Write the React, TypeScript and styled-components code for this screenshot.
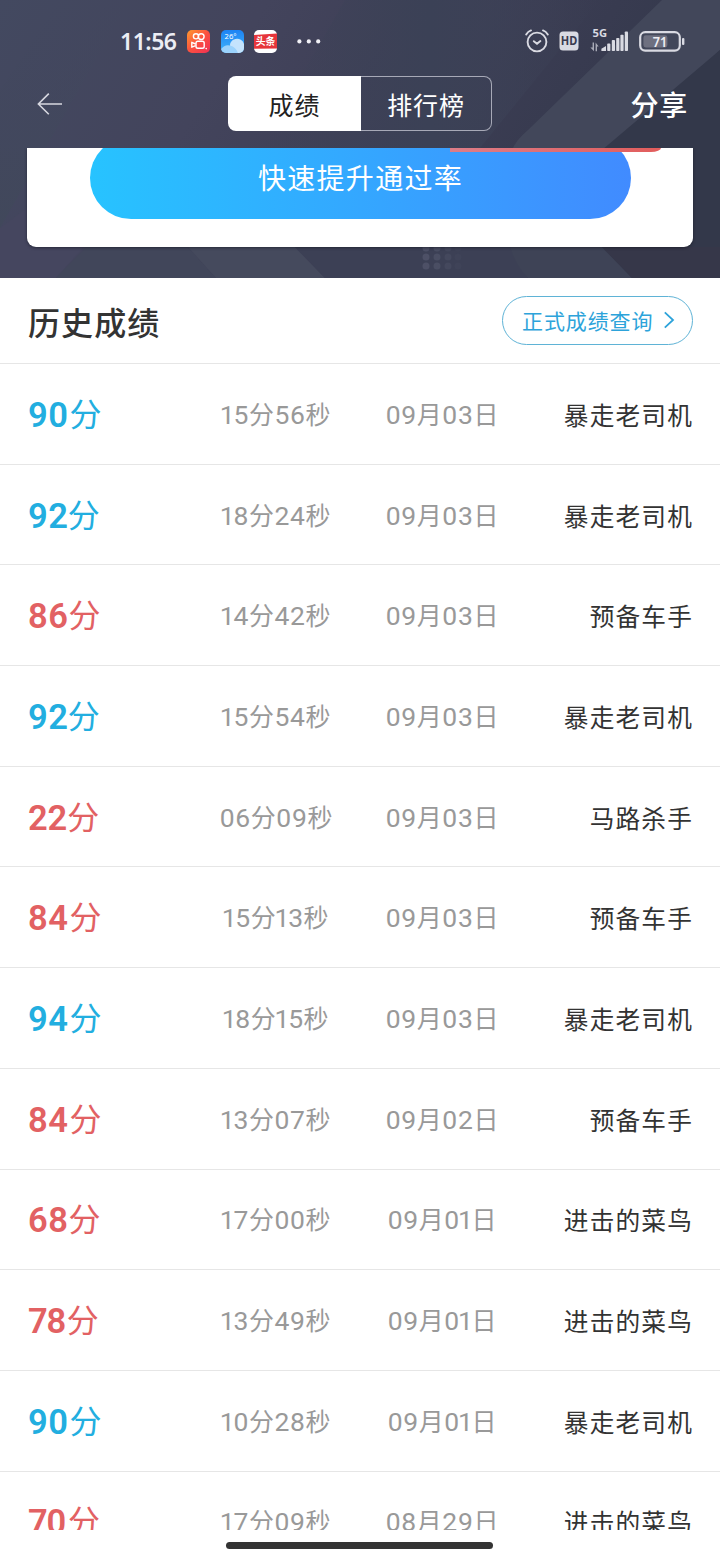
import React from "react";
import styled, { createGlobalStyle } from "styled-components";

const GlobalStyle = createGlobalStyle`
  * { box-sizing: border-box; }
  body {
    margin: 0;
    background: #fff;
    font-family: "Noto Sans", "Noto Sans CJK SC", sans-serif;
  }
`;

const Screen = styled.div`
  width: 720px;
  height: 1560px;
  display: flex;
  flex-direction: column;
  overflow: hidden;
  background: #fff;
`;

const Hero = styled.header`
  position: relative;
  flex: none;
  height: 278px;
  display: flex;
  flex-direction: column;
  background: #3e4156;
`;

const HeroArt = styled.svg`
  position: absolute;
  inset: 0;
`;

const StatusBar = styled.div`
  position: relative;
  height: 76px;
  padding: 6px 35px 0 120px;
  display: flex;
  align-items: center;
  justify-content: space-between;
`;

const StatusGroup = styled.div<{ $gap: number }>`
  display: flex;
  align-items: center;
  gap: ${(p) => p.$gap}px;
`;

const Clock = styled.span`
  width: 57px;
  font-family: "Noto Sans", sans-serif;
  font-size: 23px;
  line-height: 30px;
  font-weight: 600;
  letter-spacing: -0.5px;
  color: #ecedf4;
  white-space: nowrap;
`;

const NavBar = styled.nav`
  position: relative;
  height: 72px;
  padding: 0 32px 17px 36px;
  display: grid;
  grid-template-columns: 192px 264px 1fr;
  align-items: center;
`;

const Segments = styled.div`
  height: 55px;
  display: flex;
`;

const Segment = styled.button<{ $active?: boolean }>`
  flex: ${(p) => (p.$active ? "0 0 133px" : "1")};
  border: ${(p) => (p.$active ? "0" : "1px solid #a7a9b7")};
  border-left: 0;
  border-radius: ${(p) => (p.$active ? "8px 0 0 8px" : "0 8px 8px 0")};
  padding: 0;
  font-family: "Noto Sans CJK SC", sans-serif;
  font-size: 25px;
  letter-spacing: 0.9px;
  color: ${(p) => (p.$active ? "#222" : "#fff")};
  background: ${(p) => (p.$active ? "#fff" : "transparent")};
`;

const Share = styled.span`
  justify-self: end;
  font-family: "Noto Sans CJK SC", sans-serif;
  font-size: 28px;
  line-height: 40px;
  font-weight: 500;
  letter-spacing: 0.8px;
  color: #fff;
`;

const CardClip = styled.div`
  position: relative;
  height: 130px;
  padding: 0 27px;
  overflow: hidden;
`;

const Card = styled.section`
  display: flow-root;
  height: 99px;
  padding: 0 62px 0 63px;
  background: #fff;
  border-radius: 0 0 9px 9px;
  box-shadow: 0 1px 3px rgba(20, 22, 34, 0.6);
`;

const BoostButton = styled.button`
  display: block;
  width: 541px;
  height: 82px;
  margin-top: -11px;
  padding: 0 0 3px;
  border: 0;
  border-radius: 41px;
  font-family: "Noto Sans CJK SC", sans-serif;
  font-size: 28px;
  letter-spacing: 1.3px;
  color: #fff;
  background: linear-gradient(90deg, #27c3ff, #418bff);
`;

const BadgeEdge = styled.div`
  position: absolute;
  left: 450px;
  top: 0;
  width: 211px;
  height: 4px;
  border-radius: 0 0 10px 0 / 0 0 4px 0;
  background: linear-gradient(90deg, #dd7d88, #e25d5c);
`;

const SectionHead = styled.div`
  flex: none;
  height: 86px;
  padding: 0 27px 0 28px;
  display: flex;
  align-items: center;
  justify-content: space-between;
  border-bottom: 1px solid #e6e6e6;
`;

const Title = styled.h2`
  margin: 0;
  font-family: "Noto Sans CJK SC", sans-serif;
  font-size: 32px;
  line-height: 48px;
  font-weight: 500;
  letter-spacing: 1.1px;
  color: #333;
`;

const QueryButton = styled.button`
  width: 191px;
  height: 49px;
  padding: 0 16px 2px 19px;
  display: flex;
  align-items: center;
  justify-content: space-between;
  border: 1px solid #5fb3d6;
  border-radius: 25px;
  background: #fff;
  font-family: "Noto Sans CJK SC", sans-serif;
  font-size: 21px;
  letter-spacing: 0.9px;
  white-space: nowrap;
  color: #2da3da;
`;

const List = styled.main`
  flex: none;
  height: 1166px;
  overflow: hidden;
`;

const Row = styled.div`
  height: 100.7px;
  padding: 0 27px 0 28px;
  display: grid;
  grid-template-columns: 165px 166px 166px 1fr;
  align-items: center;
  border-bottom: 1px solid #e6e6e6;
`;

const Score = styled.div<{ $pass: boolean }>`
  display: flex;
  align-items: baseline;
  line-height: 48px;
  white-space: nowrap;
  color: ${(p) => (p.$pass ? "#22aee0" : "#e26163")};
`;

const ScoreDigit = styled.span<{ $width: number }>`
  width: ${(p) => p.$width}px;
  font-family: Roboto, sans-serif;
  font-size: 34.5px;
  font-weight: 600;
`;

const ScoreUnit = styled.span`
  position: relative;
  top: -1px;
  font-family: "Noto Sans CJK SC", sans-serif;
  font-size: 32px;
  font-weight: 400;
`;

const Stamp = styled.div`
  display: flex;
  align-items: baseline;
  justify-content: center;
  line-height: 40px;
  white-space: nowrap;
  color: #999;
`;

const Digit = styled.span<{ $narrow: boolean }>`
  width: ${(p) => (p.$narrow ? 11.8 : 15.6)}px;
  display: flex;
  justify-content: center;
  font-family: Roboto, sans-serif;
  font-size: 26.5px;
`;

const Unit = styled.span`
  width: 25.4px;
  text-align: center;
  font-family: "Noto Sans CJK SC", sans-serif;
  font-size: 25px;
`;

const Rank = styled.div`
  justify-self: end;
  font-family: "Noto Sans CJK SC", sans-serif;
  font-size: 24.7px;
  line-height: 40px;
  letter-spacing: 1.15px;
  white-space: nowrap;
  color: #333;
`;

const Footer = styled.footer`
  height: 30px;
  padding-top: 12px;
  display: flex;
  justify-content: center;
`;

const HomeBar = styled.div`
  width: 267px;
  height: 7px;
  margin-right: 1px;
  border-radius: 4px;
  background: #333;
`;

type Result = { score: number; time: string; date: string; rank: string };

const results: Result[] = [
  { score: 90, time: "15分56秒", date: "09月03日", rank: "暴走老司机" },
  { score: 92, time: "18分24秒", date: "09月03日", rank: "暴走老司机" },
  { score: 86, time: "14分42秒", date: "09月03日", rank: "预备车手" },
  { score: 92, time: "15分54秒", date: "09月03日", rank: "暴走老司机" },
  { score: 22, time: "06分09秒", date: "09月03日", rank: "马路杀手" },
  { score: 84, time: "15分13秒", date: "09月03日", rank: "预备车手" },
  { score: 94, time: "18分15秒", date: "09月03日", rank: "暴走老司机" },
  { score: 84, time: "13分07秒", date: "09月02日", rank: "预备车手" },
  { score: 68, time: "17分00秒", date: "09月01日", rank: "进击的菜鸟" },
  { score: 78, time: "13分49秒", date: "09月01日", rank: "进击的菜鸟" },
  { score: 90, time: "10分28秒", date: "09月01日", rank: "暴走老司机" },
  { score: 70, time: "17分09秒", date: "08月29日", rank: "进击的菜鸟" },
];

/* Proportional advances of the score numerals. */
const scoreAdvance: Record<string, number> = {
  "0": 21.4, "2": 19.6, "4": 21.2, "6": 20.2, "7": 18.6, "8": 20.2, "9": 20.2,
};

const StampText = ({ text }: { text: string }) => (
  <Stamp>
    {[...text].map((ch, i) =>
      /\d/.test(ch) ? (
        <Digit key={i} $narrow={ch === "1"}>{ch}</Digit>
      ) : (
        <Unit key={i}>{ch}</Unit>
      )
    )}
  </Stamp>
);

const HeroBackground = () => (
  <HeroArt width="720" height="278" viewBox="0 0 720 278">
    <defs>
      <linearGradient id="base" x1="0" y1="0" x2="1" y2="0.25">
        <stop offset="0" stopColor="#434960" />
        <stop offset="0.35" stopColor="#43445c" />
        <stop offset="0.62" stopColor="#3d3e55" />
        <stop offset="1" stopColor="#33384b" />
      </linearGradient>
      <linearGradient id="leftBand" x1="0" y1="0" x2="0" y2="1">
        <stop offset="0" stopColor="#42485f" stopOpacity="0" />
        <stop offset="1" stopColor="#41485b" />
      </linearGradient>
      <linearGradient id="midBand" x1="0" y1="0" x2="1" y2="0">
        <stop offset="0" stopColor="#3e4358" stopOpacity="0" />
        <stop offset="0.5" stopColor="#3b4156" />
        <stop offset="1" stopColor="#3e4358" stopOpacity="0" />
      </linearGradient>
    </defs>
    <rect width="720" height="278" fill="url(#base)" />
    <path d="M345 0H600L480 148H260Z" fill="url(#midBand)" />
    <path d="M0 90L60 0H130L0 228Z" fill="url(#leftBand)" />
    <path d="M0 228L27 208V278H0Z" fill="#45465f" />
    <path d="M27 240H90L56 278H27Z" fill="#45465f" />
    <path d="M86 247H188L216 278H56Z" fill="#41465a" />
    <path d="M188 247H295L325 278H216Z" fill="#454a5d" />
    <path d="M295 247H510L528 278H325Z" fill="#3c4055" />
    <path d="M662 0H720V50L612 150H512Q516 140 528 130Z" fill="#42475a" />
    <path d="M720 50V278H632L602 247V150Z" fill="#33384a" />
    <path d="M510 247H602L632 278H528Q516 266 510 247Z" fill="#3e4356" />
    <path d="M602 247H720V278H632Z" fill="#363749" />
    {[248, 257, 266].map((y) =>
      [426, 437, 448, 458].map((x, i) => (
        <circle key={`${x}-${y}`} cx={x} cy={y} r="3.5" fill="#50546a" opacity={[0.85, 0.7, 0.4, 0.15][i]} />
      ))
    )}
  </HeroArt>
);

const VideoAppIcon = () => (
  <svg width="23" height="23" viewBox="0 0 23 23">
    <defs>
      <linearGradient id="video" x1="0" y1="0" x2="1" y2="1">
        <stop offset="0" stopColor="#ff9a2e" />
        <stop offset="0.5" stopColor="#fb5040" />
        <stop offset="1" stopColor="#ee3054" />
      </linearGradient>
    </defs>
    <rect width="23" height="23" rx="5" fill="url(#video)" />
    <g fill="none" stroke="#fff" strokeWidth="1.4" strokeLinejoin="round">
      <circle cx="9" cy="6.3" r="2.6" />
      <circle cx="14.2" cy="6.6" r="2.9" />
      <rect x="9" y="11.2" width="8.2" height="7" rx="1.8" />
      <path d="M8.6 14L4.8 12.3V17.2L8.6 15.6" />
    </g>
    <circle cx="19.2" cy="18.6" r="0.8" fill="#fff" />
  </svg>
);

const WeatherIcon = () => (
  <svg width="23" height="23" viewBox="0 0 23 23">
    <defs>
      <linearGradient id="sky" x1="0" y1="0" x2="0" y2="1">
        <stop offset="0" stopColor="#1d83f4" />
        <stop offset="1" stopColor="#40b4fb" />
      </linearGradient>
      <clipPath id="tile"><rect width="23" height="23" rx="5" /></clipPath>
    </defs>
    <g clipPath="url(#tile)">
      <rect width="23" height="23" fill="url(#sky)" />
      <path d="M9 17A7 6.5 0 0 1 23 14V23H8Z" fill="#c4e3fd" />
      <path d="M0 19Q4 14 9 15.5Q15 17 17 23H0Z" fill="#9bd2fc" />
      <text x="3.6" y="9.2" fontSize="7.6" fontFamily="Noto Sans" fill="#fff">26°</text>
    </g>
  </svg>
);

const NewsIcon = () => (
  <svg width="23" height="23" viewBox="0 0 23 23">
    <rect width="23" height="23" rx="5" fill="#fff" />
    <path d="M0 5L23 3.6V18.4L0 18.8Z" fill="#e6353b" />
    <text x="11.5" y="15.2" fontSize="9.8" fontWeight="700" textAnchor="middle" fontFamily="Noto Sans CJK SC" fill="#fff">头条</text>
  </svg>
);

const MoreDots = styled.svg`
  margin-left: 10px;
`;

const AlarmIcon = () => (
  <svg width="24" height="24" viewBox="0 0 24 24" fill="none" stroke="#d9dae2" strokeWidth="1.9" strokeLinecap="round">
    <circle cx="12" cy="13" r="9.4" />
    <path d="M1.2 5.4Q3 2.4 6 1.4M22.8 5.4Q21 2.4 18 1.4" />
    <path d="M8.8 12.2L12 14.8L15.4 12" />
  </svg>
);

const HdIcon = () => (
  <svg width="20" height="20" viewBox="0 0 20 20">
    <rect x="0.5" y="0.5" width="19" height="19" rx="3.5" fill="#d9dae2" />
    <text x="10" y="14.2" fontSize="11.6" fontWeight="700" textAnchor="middle" fontFamily="Noto Sans" fill="#3a3b50" textLength="16.5" lengthAdjust="spacingAndGlyphs">HD</text>
  </svg>
);

const SignalIcon = () => (
  <svg width="39" height="28" viewBox="0 -2 39 28" fill="#d9dae2" overflow="visible">
    <text x="2.6" y="7.6" fontSize="10.4" fontWeight="700" fontFamily="Noto Sans" textLength="14.5" lengthAdjust="spacingAndGlyphs">5G</text>
    <path d="M2.6 13.6H4V22.2L0.4 18.6H2.6ZM5.6 22.2V13.6L8.6 17.4H7V22.2Z" opacity="0.7" />
    <path d="M11.4 22V19.8L16 17V22Z" />
    <rect x="17.2" y="14.6" width="3.2" height="7.4" rx="0.8" />
    <rect x="21.8" y="11" width="3.2" height="11" rx="0.8" />
    <rect x="26.2" y="9" width="3.2" height="13" rx="0.8" />
    <rect x="30.4" y="5.8" width="3.2" height="16.2" rx="0.8" />
    <rect x="34.8" y="2.4" width="3.2" height="19.6" rx="0.8" />
  </svg>
);

const BatteryIcon = () => (
  <svg width="46" height="21" viewBox="0 0 46 21">
    <rect x="1.2" y="1.2" width="39.6" height="18.4" rx="5" fill="none" stroke="#d9dae2" strokeWidth="2.2" />
    <rect x="4.4" y="4.3" width="24" height="12.2" rx="2.4" fill="#6e7080" />
    <rect x="43" y="7" width="2.4" height="7" rx="1" fill="#d9dae2" />
    <text x="21" y="15.6" fontSize="14.2" fontWeight="600" textAnchor="middle" fontFamily="Noto Sans" fill="#eeeef3" textLength="14.5" lengthAdjust="spacingAndGlyphs">71</text>
  </svg>
);

const BackIcon = () => (
  <svg width="27" height="24" viewBox="0 0 27 24" fill="none" stroke="#d7d8e0" strokeWidth="1.6">
    <path d="M26 12H2.4M12.8 1.6L2.4 12L12.8 22.2" />
  </svg>
);

const ChevronIcon = () => (
  <svg width="12" height="18" viewBox="0 0 12 18" fill="none" stroke="#2da3da" strokeWidth="1.8">
    <path d="M0.8 1.4L9 9L0.8 16.6" />
  </svg>
);

export default function App() {
  return (
    <Screen>
      <GlobalStyle />
      <Hero>
        <HeroBackground />
        <StatusBar>
          <StatusGroup $gap={10.3}>
            <Clock>11:56</Clock>
            <VideoAppIcon />
            <WeatherIcon />
            <NewsIcon />
            <MoreDots width="24" height="6" viewBox="0 0 24 6" fill="#f1f1f6">
              <circle cx="2.4" cy="3.4" r="2.1" />
              <circle cx="11.8" cy="3.4" r="2.1" />
              <circle cx="21.2" cy="3.4" r="2.1" />
            </MoreDots>
          </StatusGroup>
          <StatusGroup $gap={10.3}>
            <AlarmIcon />
            <HdIcon />
            <SignalIcon />
            <BatteryIcon />
          </StatusGroup>
        </StatusBar>
        <NavBar>
          <BackIcon />
          <Segments>
            <Segment $active>成绩</Segment>
            <Segment>排行榜</Segment>
          </Segments>
          <Share>分享</Share>
        </NavBar>
        <CardClip>
          <Card>
            <BoostButton>快速提升通过率</BoostButton>
          </Card>
          <BadgeEdge />
        </CardClip>
      </Hero>
      <SectionHead>
        <Title>历史成绩</Title>
        <QueryButton>
          正式成绩查询
          <ChevronIcon />
        </QueryButton>
      </SectionHead>
      <List>
        {results.map((r, i) => (
          <Row key={i}>
            <Score $pass={r.score >= 90}>
              {[...String(r.score)].map((d, j) => (
                <ScoreDigit key={j} $width={scoreAdvance[d]}>{d}</ScoreDigit>
              ))}
              <ScoreUnit>分</ScoreUnit>
            </Score>
            <StampText text={r.time} />
            <StampText text={r.date} />
            <Rank>{r.rank}</Rank>
          </Row>
        ))}
      </List>
      <Footer>
        <HomeBar />
      </Footer>
    </Screen>
  );
}
